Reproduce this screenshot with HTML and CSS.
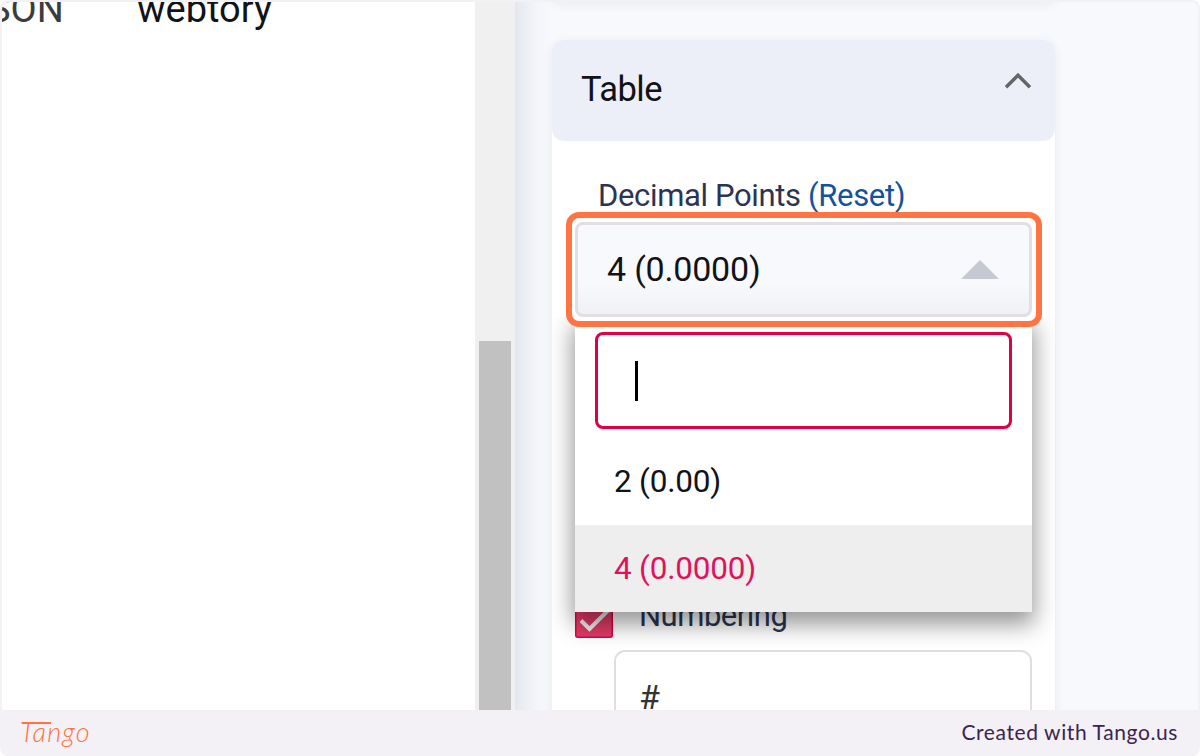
FILE: index.html
```html
<!DOCTYPE html>
<html lang="en">
<head>
    <meta charset="UTF-8">
    <meta name="viewport" content="width=device-width, initial-scale=1.0">
    <title>Table - Decimal Points</title>
    <link rel="stylesheet" href="styles.css">
</head>
<body>
    <div class="frame">
        <main class="capture">
            <div class="document">
                <span class="cell-type">JSON</span>
                <span class="cell-name">webtory</span>
            </div>

            <div class="scrollbar">
                <div class="scrollbar-thumb"></div>
            </div>

            <aside class="sidebar">
                <div class="panel panel-previous"></div>

                <section class="panel">
                    <header class="panel-header">
                        <h2>Table</h2>
                        <svg class="chevron" width="28" height="18" viewBox="0 0 28 18">
                            <path d="M2 15.2 L14 3.2 L26 15.2" fill="none" stroke="#666669" stroke-width="3.5"/>
                        </svg>
                    </header>

                    <div class="panel-body">
                        <div class="field-label">Decimal Points <a class="reset">(Reset)</a></div>

                        <div class="select">
                            <div class="select-box">
                                <span>4 (0.0000)</span>
                                <svg width="38" height="19" viewBox="0 0 38 19">
                                    <path d="M0 19 L19 0 L38 19 Z" fill="#c5c9d1"/>
                                </svg>
                            </div>
                            <div class="dropdown">
                                <div class="search"><span class="caret"></span></div>
                                <div class="option">2 (0.00)</div>
                                <div class="option selected">4 (0.0000)</div>
                            </div>
                            <div class="highlight"></div>
                        </div>

                        <div class="check-row">
                            <svg class="checkbox" width="38" height="38" viewBox="0 0 38 38">
                                <rect x="0.75" y="0.75" width="36.5" height="36.5" rx="2" fill="#e23a66" stroke="#e0003f" stroke-width="1.5"/>
                                <path d="M6 20.5 L14.5 29 L33 10.5" fill="none" stroke="#f2f2f2" stroke-width="4"/>
                            </svg>
                            <span>Numbering</span>
                        </div>
                        <div class="text-input">#</div>
                    </div>
                </section>
            </aside>
        </main>

        <footer class="footer">
            <span class="logo">Tango</span>
            <span class="credit">Created with Tango.us</span>
        </footer>
    </div>
</body>
</html>
```

FILE: styles.css
```css
* {
    box-sizing: border-box;
}

body {
    margin: 0;
    background: #ffffff;
    font-family: Roboto, sans-serif;
    color: #111318;
}

.frame {
    display: flex;
    flex-direction: column;
    width: 1200px;
    height: 756px;
    padding: 2px 2px 0;
    background: #f3f1f6;
    border-radius: 8px;
    overflow: hidden;
}

.capture {
    display: flex;
    height: 708px;
    border-radius: 8px 8px 0 0;
    background: #ffffff;
    overflow: hidden;
}

.document {
    display: flex;
    width: 473px;
    height: 40px;
    margin-top: -13px;
    font-size: 38px;
    line-height: 40px;
}

.cell-type {
    width: 136px;
    margin-left: -35px;
    color: #3c3c3e;
    flex: none;
}

.cell-name {
    margin-left: 34px;
}

.scrollbar {
    width: 40px;
    padding: 339px 4px 0;
    background: #f0f0f0;
}

.scrollbar-thumb {
    height: 100%;
    background: #c1c1c1;
}

.sidebar {
    flex: 1;
    padding: 0 143px 0 37px;
    background: linear-gradient(to right, #e4e7ec 0, #ebeef3 10px, #f3f5fa 22px, #f8f9fd 38px);
}

.panel {
    height: 700px;
    border-radius: 12px;
    background: #ffffff;
    box-shadow: 0 2px 10px rgba(40, 50, 60, 0.08);
}

.panel-previous {
    height: 10px;
    margin-top: -10px;
    margin-bottom: 38px;
}

.panel-header {
    display: flex;
    justify-content: space-between;
    height: 101px;
    padding: 32px 23px 0 29px;
    border-radius: 12px;
    background: #eceff7;
}

.panel-header h2 {
    margin: 0;
    font-size: 34.5px;
    font-weight: 400;
    line-height: 34px;
    letter-spacing: -0.5px;
}

.panel-body {
    padding: 36px 23px 0;
}

.field-label {
    height: 45px;
    padding-left: 23px;
    font-size: 31px;
    line-height: 38px;
    letter-spacing: -0.35px;
    color: #2b3553;
    white-space: nowrap;
}

.reset {
    color: #14529c;
}

.select {
    position: relative;
    height: 95px;
    font-size: 34px;
    letter-spacing: -0.2px;
}

.select-box {
    display: flex;
    justify-content: space-between;
    align-items: center;
    height: 95px;
    padding: 0 30px 2px 29px;
    border: 3px solid #e2dee4;
    border-radius: 8px;
    background: linear-gradient(#f8f9fd 65%, #f0f1f5);
}

.select-box svg {
    margin-top: 2px;
}

.highlight {
    position: absolute;
    top: -10px;
    left: -9px;
    width: 476px;
    height: 115px;
    border: 6px solid #ff7442;
    border-radius: 13px;
    box-shadow: inset 0 0 0 3px #ffffff;
}

.dropdown {
    position: absolute;
    top: 95px;
    left: 0;
    width: 457px;
    height: 295px;
    padding-top: 15px;
    background: #ffffff;
    box-shadow: 0 10px 22px 2px rgba(0, 0, 0, 0.42);
    clip-path: inset(0 -24px -50px -23px);
    font-size: 31.5px;
}

.search {
    height: 97px;
    margin: 0 20px 10px;
    padding: 26px 0 0 37px;
    border: 3px solid #e20045;
    border-radius: 8px;
}

.caret {
    display: block;
    width: 3px;
    height: 40px;
    background: #000000;
}

.option {
    height: 86px;
    padding-left: 39px;
    line-height: 86px;
}

.option.selected {
    height: 87px;
    line-height: 87px;
    background: #eeeeee;
    color: #e2125a;
}

.check-row {
    display: flex;
    height: 50px;
    margin-top: 283px;
    font-size: 31px;
    line-height: 31px;
    letter-spacing: -0.5px;
    color: #2b3553;
}

.check-row span {
    margin-left: 26px;
}

.text-input {
    width: 418px;
    height: 90px;
    margin-left: 39px;
    padding-left: 23px;
    border: 2px solid #dfdfe1;
    border-radius: 11px;
    font-size: 34px;
    line-height: 90px;
    color: #333333;
}

.footer {
    display: flex;
    flex: 1;
    justify-content: space-between;
    align-items: center;
    padding: 0 20px 3px 18px;
    background: #f3f1f6;
    font-family: Lato, sans-serif;
}

.logo {
    position: relative;
    color: #ff7442;
    font-size: 27px;
    font-style: italic;
    font-weight: 300;
    letter-spacing: 1.2px;
}

/* long crossbar of the T */
.logo::before {
    content: "";
    position: absolute;
    top: 7px;
    left: 2px;
    width: 29px;
    height: 2px;
    background: #ff7442;
}

.credit {
    color: #3b2450;
    font-size: 21px;
    letter-spacing: 0.6px;
}
```
